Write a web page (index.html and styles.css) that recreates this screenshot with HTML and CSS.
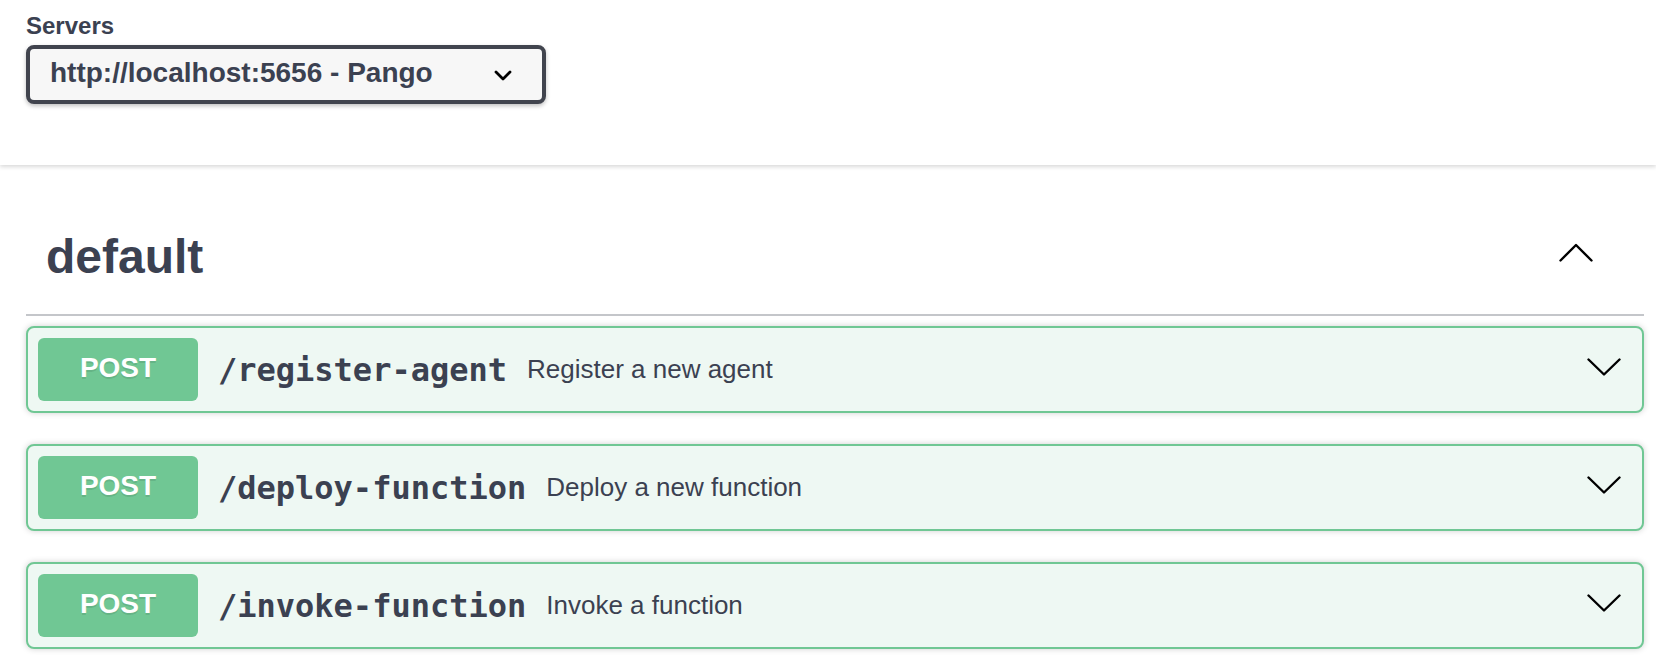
FILE: index.html
```html
<!DOCTYPE html>
<html lang="en">
<head>
<meta charset="utf-8">
<title>Swagger UI</title>
<link rel="stylesheet" href="styles.css">
</head>
<body>
<div class="scheme">
  <div class="servers-title">Servers</div>
  <div class="select">
    <span class="select-text">http://localhost:5656 - Pango</span>
    <svg class="select-arrow" width="18" height="11" viewBox="0 0 18 11"><polyline points="2,2 9,9 16,2" fill="none" stroke="#000" stroke-width="2.8" stroke-linecap="round" stroke-linejoin="round"/></svg>
  </div>
</div>
<section class="tag-section">
  <h3 class="tag">
    <span class="tag-name">default</span>
    <svg class="tag-arrow" width="34" height="19" viewBox="0 0 34 19"><polyline points="1.5,17.5 17,2 32.5,17.5" fill="none" stroke="#000" stroke-width="2.4" stroke-linecap="round" stroke-linejoin="round"/></svg>
  </h3>
  <div class="opblock">
    <span class="method">POST</span>
    <span class="path">/register-agent</span>
    <span class="desc">Register a new agent</span>
    <svg class="op-arrow" width="34" height="18" viewBox="0 0 34 18"><polyline points="1.5,1.5 17,16.5 32.5,1.5" fill="none" stroke="#000" stroke-width="2.4" stroke-linecap="round" stroke-linejoin="round"/></svg>
  </div>
  <div class="opblock">
    <span class="method">POST</span>
    <span class="path">/deploy-function</span>
    <span class="desc">Deploy a new function</span>
    <svg class="op-arrow" width="34" height="18" viewBox="0 0 34 18"><polyline points="1.5,1.5 17,16.5 32.5,1.5" fill="none" stroke="#000" stroke-width="2.4" stroke-linecap="round" stroke-linejoin="round"/></svg>
  </div>
  <div class="opblock">
    <span class="method">POST</span>
    <span class="path">/invoke-function</span>
    <span class="desc">Invoke a function</span>
    <svg class="op-arrow" width="34" height="18" viewBox="0 0 34 18"><polyline points="1.5,1.5 17,16.5 32.5,1.5" fill="none" stroke="#000" stroke-width="2.4" stroke-linecap="round" stroke-linejoin="round"/></svg>
  </div>
</section>
</body>
</html>
```

FILE: styles.css
```css
html, body {
  margin: 0;
  padding: 0;
  background: #ffffff;
}

body {
  font-family: "Liberation Sans", Arial, Helvetica, sans-serif;
  color: #3b4151;
  overflow: hidden;
}

.scheme {
  padding: 12px 26px 61px;
  background: #ffffff;
  box-shadow: 0 2px 4px 0 rgba(0, 0, 0, 0.15);
  position: relative;
}

.servers-title {
  font-size: 24px;
  font-weight: 700;
  line-height: 28px;
  margin-bottom: 5px;
}

.select {
  display: flex;
  align-items: center;
  justify-content: space-between;
  box-sizing: border-box;
  width: 520px;
  padding: 8px 30px 11px 20px;
  border: 4px solid #41444e;
  border-radius: 8px;
  background: #f7f7f7;
  box-shadow: 0 2px 4px 0 rgba(0, 0, 0, 0.25);
  font-size: 28px;
  font-weight: 700;
  line-height: 32px;
  color: #3b4151;
}

.select-arrow {
  display: block;
  margin-top: 4px;
}

.tag-section {
  padding: 40px 12px 0 26px;
}

.tag {
  display: flex;
  align-items: center;
  justify-content: space-between;
  margin: 0 0 10px;
  padding: 24px 40px 30px 20px;
  border-bottom: 2px solid rgba(59, 65, 81, 0.3);
  font-size: 48px;
  font-weight: 700;
  line-height: 55px;
  color: #3b4151;
}

.tag-arrow {
  display: block;
  margin: 0 11px 8px 0;
}

.opblock {
  display: flex;
  align-items: center;
  padding: 10px;
  border: 2px solid #70c794;
  border-radius: 8px;
  background: #eef8f3;
  box-shadow: 0 0 6px rgba(0, 0, 0, 0.19);
  margin-bottom: 31px;
}

.method {
  box-sizing: border-box;
  width: 160px;
  padding: 14px 0 17px;
  line-height: 32px;
  text-align: center;
  font-size: 28px;
  font-weight: 700;
  color: #ffffff;
  background: #70c794;
  border-radius: 6px;
  text-shadow: 0 2px 0 rgba(0, 0, 0, 0.1);
}

.path {
  font-family: "DejaVu Sans Mono", Menlo, monospace;
  font-size: 32px;
  font-weight: 700;
  padding: 0 20px;
  color: #3b4151;
}

.desc {
  flex: 1;
  font-size: 26px;
  color: #3b4151;
}

.op-arrow {
  display: block;
  margin: 0 11px 6px 0;
}
```
